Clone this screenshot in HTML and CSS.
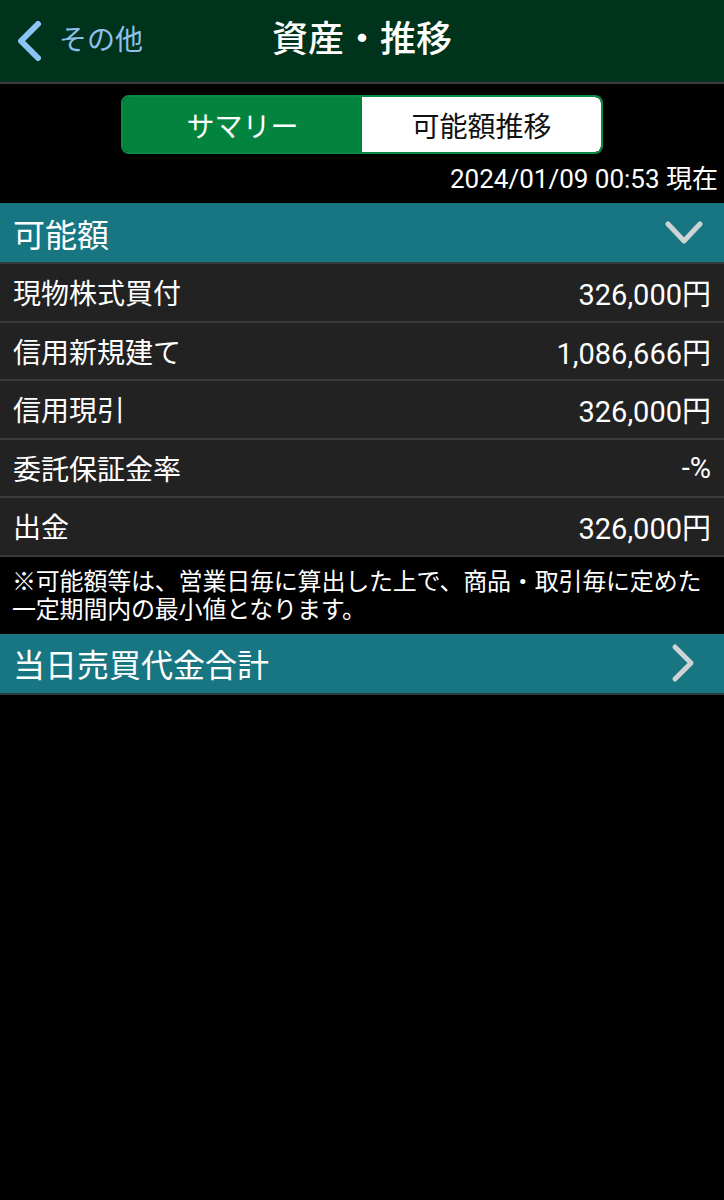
FILE: index.html
```
<!DOCTYPE html>
<html lang="ja">
<head>
<meta charset="utf-8">
<link rel="stylesheet" href="styles.css">
</head>
<body>
<header class="topbar">
  <div class="back">
    <svg class="back-icon" width="28" height="40" viewBox="0 0 28 40"><path d="M23 3 L6 20 L23 37" fill="none" stroke="#8cc4f4" stroke-width="6" stroke-linecap="round" stroke-linejoin="round"/></svg>
    <span class="back-text">その他</span>
  </div>
  <h1 class="title">資産・推移</h1>
  <div class="spacer"></div>
</header>

<div class="segment-wrap">
  <div class="segment">
    <div class="seg seg-active">サマリー</div>
    <div class="seg seg-inactive">可能額推移</div>
  </div>
</div>

<div class="timestamp">2024/01/09 00:53 現在</div>

<section class="section">
  <div class="section-head">
    <span>可能額</span>
    <svg class="down-chev" width="38" height="24" viewBox="0 0 38 24"><path d="M3 3 L19 20 L35 3" fill="none" stroke="#cfd3d3" stroke-width="5" stroke-linecap="round" stroke-linejoin="round"/></svg>
  </div>
  <div class="row"><span>現物株式買付</span><span class="val">326,000円</span></div>
  <div class="row"><span>信用新規建て</span><span class="val">1,086,666円</span></div>
  <div class="row"><span>信用現引</span><span class="val">326,000円</span></div>
  <div class="row"><span>委託保証金率</span><span class="val">-%</span></div>
  <div class="row"><span>出金</span><span class="val">326,000円</span></div>
</section>

<p class="note">※可能額等は、営業日毎に算出した上で、商品・取引毎に定めた一定期間内の最小値となります。</p>

<section class="section">
  <div class="section-head">
    <span>当日売買代金合計</span>
    <svg class="right-chev" width="26" height="40" viewBox="0 0 26 40"><path d="M5 4 L21 20 L5 36" fill="none" stroke="#cfd3d3" stroke-width="5" stroke-linecap="round" stroke-linejoin="round"/></svg>
  </div>
</section>
</body>
</html>
```

FILE: styles.css
```
html, body {
  margin: 0;
  padding: 0;
  background: #000;
}
body {
  font-family: Roboto, "Noto Sans CJK JP", sans-serif;
  color: #fff;
  width: 724px;
}
.topbar {
  height: 82px;
  background: #00331b;
  border-bottom: 2px solid #3d3d3d;
  display: grid;
  grid-template-columns: 1fr auto 1fr;
  align-items: center;
}
.back {
  display: flex;
  align-items: center;
  padding-left: 15px;
  gap: 16px;
}
.back-text {
  font-size: 28px;
  color: #8ec0ee;
  line-height: 1;
}
.title {
  margin: 0;
  font-size: 36px;
  font-weight: 500;
  line-height: 1;
  padding-bottom: 2px;
}
.segment-wrap {
  display: flex;
  justify-content: center;
  padding-top: 11px;
}
.segment {
  display: flex;
  width: 482px;
  height: 59px;
  border-radius: 8px;
  overflow: hidden;
  border: 2px solid #0a8a45;
  box-sizing: border-box;
}
.seg {
  flex: 1;
  display: flex;
  align-items: center;
  justify-content: center;
  font-size: 28px;
}
.seg-active {
  background: #02843f;
  color: #fff;
}
.seg-inactive {
  background: #fff;
  color: #111;
  border-radius: 0 6px 6px 0;
}
.timestamp {
  text-align: right;
  font-size: 26px;
  padding-right: 6px;
  height: 49px;
  line-height: 50px;
}
.section-head {
  height: 59px;
  background: #177681;
  border-bottom: 2px solid #2f3b3d;
  display: flex;
  align-items: center;
  justify-content: space-between;
  padding: 0 20px 0 13px;
  font-size: 32px;
}
.down-chev {
  margin-right: 1px;
}
.right-chev {
  margin-right: 8px;
}
.row {
  height: 56.5px;
  background: #222;
  border-bottom: 2px solid #3a3a3a;
  display: flex;
  align-items: center;
  justify-content: space-between;
  padding: 0 13px;
  font-size: 28px;
}
.val {
  font-size: 29px;
}
.note {
  margin: 0;
  padding: 11px 10px 10px 12px;
  font-size: 24px;
  line-height: 28px;
  letter-spacing: -0.2px;
}
```
